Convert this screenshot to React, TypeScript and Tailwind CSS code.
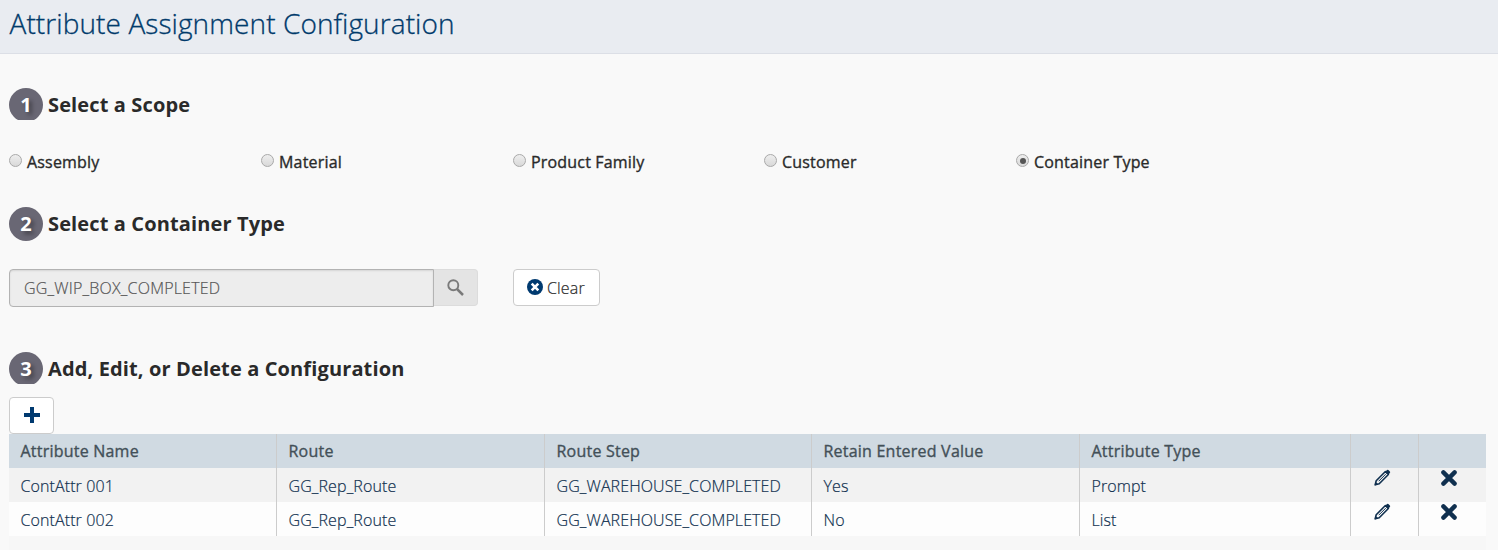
const scopes = [
  { label: 'Assembly', width: 'w-[252px]' },
  { label: 'Material', width: 'w-[252px]' },
  { label: 'Product Family', width: 'w-[251px]' },
  { label: 'Customer', width: 'w-[252px]' },
  { label: 'Container Type', width: 'w-[252px]', checked: true },
];

const columns = ['Attribute Name', 'Route', 'Route Step', 'Retain Entered Value', 'Attribute Type'];
const rows = [
  ['ContAttr 001', 'GG_Rep_Route', 'GG_WAREHOUSE_COMPLETED', 'Yes', 'Prompt'],
  ['ContAttr 002', 'GG_Rep_Route', 'GG_WAREHOUSE_COMPLETED', 'No', 'List'],
];
const grid = 'grid h-[34px] grid-cols-[268px_268px_267px_268px_271px_68px_67px]';

function Step({ n, title, clipped }: { n: number; title: string; clipped?: boolean }) {
  return (
    <div className="flex h-[34px] items-start">
      <div className={clipped ? 'h-8 overflow-hidden' : 'h-[34px]'}>
        <div className="flex size-[34px] items-center justify-center rounded-full bg-[#696774] text-xl leading-[34px] font-bold text-white [text-shadow:3px_3px_4px_rgba(0,0,0,0.4)]">
          {n}
        </div>
      </div>
      <h2 className="ml-[5px] text-xl leading-[33px] font-bold tracking-[0.13px] whitespace-nowrap text-[#2a2a2a]">{title}</h2>
    </div>
  );
}

function Radio({ checked }: { checked?: boolean }) {
  return (
    <span className="mb-[3px] flex size-[13px] items-center justify-center rounded-full border border-[#a9a9a9] bg-linear-to-b from-[#eeeeee] to-[#d9d9d9]">
      {checked && <span className="size-[6px] rounded-full bg-[#555555]" />}
    </span>
  );
}

function Pencil() {
  return (
    <svg viewBox="0 0 17 17" className="size-[17px]" fill="none" stroke="#10304f">
      <path d="M1.2 15.8 2.2 11.7 11.4 2.5 14.4 5.5 5.2 14.7Z" strokeWidth="1.6" strokeLinejoin="round" />
      <path d="M11 3 13 1Q13.7.5 14.4 1.1L15.9 2.6Q16.5 3.3 15.9 4L14 6Z" fill="#10304f" stroke="none" />
      <path d="M4.7 12.2 11.7 5.2" strokeWidth="1" />
      <path d="M.6 16.4 1.6 12.8 4.2 15.4Z" fill="#10304f" stroke="none" />
    </svg>
  );
}

function Cross() {
  return (
    <svg viewBox="0 0 16 16" className="size-4" stroke="#10304f" strokeWidth="4.4" strokeLinecap="round">
      <path d="M2.4 2.4 13.6 13.6M13.6 2.4 2.4 13.6" />
    </svg>
  );
}

export default function App() {
  return (
    <div className="flex h-[550px] w-[1498px] flex-col overflow-hidden bg-[#f9f9f9] font-['Open_Sans',sans-serif] text-[#333]">
      <header className="h-[54px] border-b border-[#dcdfe6] bg-[#e9ecf1] pl-[9.5px]">
        <h1 className="text-[28px] leading-[46px] font-light tracking-[0.09px] whitespace-nowrap text-[#003a6b] [-webkit-text-stroke:0.3px]">
          Attribute Assignment Configuration
        </h1>
      </header>
      <main className="flex flex-1 flex-col pr-3 pl-[9px]">
        <div className="mt-[34px]">
          <Step n={1} title="Select a Scope" clipped />
        </div>
        <div className="mt-7 flex h-6">
          {scopes.map((s) => (
            <label key={s.label} className={`flex items-center ${s.width}`}>
              <Radio checked={s.checked} />
              <span className="ml-[5px] text-base leading-6 tracking-[0.18px] whitespace-nowrap text-[#2a2a2a] [-webkit-text-stroke:0.35px]">{s.label}</span>
            </label>
          ))}
        </div>
        <div className="mt-[33px]">
          <Step n={2} title="Select a Container Type" />
        </div>
        <div className="mt-7 flex h-[38px] items-start">
          <div className="flex h-[38px] w-[425px] items-center rounded-l border border-[#b3b3b3] bg-[#ededed] pl-[14px] text-base font-light tracking-[0.2px] text-[#555] shadow-[inset_0_1px_2px_rgba(0,0,0,0.1)] [-webkit-text-stroke:0.2px]">
            GG_WIP_BOX_COMPLETED
          </div>
          <button className="flex h-[37px] w-11 items-center justify-center rounded-r border border-l-0 border-[#dcdcdc] bg-[#e4e4e4]">
            <svg viewBox="0 0 17 17" className="size-[17px]" fill="none" stroke="#7a7a7a">
              <circle cx="6.3" cy="6.2" r="5" strokeWidth="1.9" />
              <path d="M10 10 16 16" strokeWidth="2.5" />
            </svg>
          </button>
          <button className="ml-[35px] flex h-[37px] w-[87px] items-center rounded border border-[#ccc] bg-white pl-[13px] text-base font-light text-[#2a2a2a] [-webkit-text-stroke:0.2px]">
            <svg viewBox="0 0 16 16" className="mb-px size-4">
              <circle cx="8" cy="8" r="8" fill="#003a70" />
              <path d="M4.7 4.7 11.3 11.3M11.3 4.7 4.7 11.3" stroke="#fff" strokeWidth="2.6" />
            </svg>
            <span className="ml-1 tracking-[0.15px]">Clear</span>
          </button>
        </div>
        <div className="mt-[45px]">
          <Step n={3} title="Add, Edit, or Delete a Configuration" clipped />
        </div>
        <button className="mt-[11px] flex h-[37px] w-[45px] shrink-0 items-center justify-center rounded border border-[#ccc] bg-white pb-px">
          <svg viewBox="0 0 16 16" className="size-4" fill="#003a70">
            <path d="M6 0h4v6h6v4h-6v6H6v-6H0V6h6z" />
          </svg>
        </button>
        <div className="flex w-[1477px] flex-1 flex-col bg-[#f7f7f7]">
          <div className={`${grid} bg-[#d0dae2] tracking-[0.22px] text-[#435058] [-webkit-text-stroke:0.35px]`}>
            {columns.map((c) => (
              <div key={c} className="border-r border-[#ccc] pl-[11.5px] leading-[34px] whitespace-nowrap">{c}</div>
            ))}
            <div className="border-r border-[#ccc]" />
            <div />
          </div>
          {rows.map((r, i) => (
            <div key={r[0]} className={`${grid} text-[#10304f] ${i === 0 ? 'bg-[#f2f2f2]' : 'bg-[#fdfdfd]'}`}>
              {r.map((c) => (
                <div key={c} className="h-[34px] border-r border-[#ccc] pt-px pl-[11.5px] leading-[34px] font-light tracking-[0.1px] whitespace-nowrap [-webkit-text-stroke:0.2px]">{c}</div>
              ))}
              <div className="flex h-[34px] justify-center border-r border-[#ccc] pt-px pr-[5px]"><Pencil /></div>
              <div className="flex h-[34px] justify-center pt-[2px] pr-[7px]"><Cross /></div>
            </div>
          ))}
        </div>
      </main>
    </div>
  );
}
